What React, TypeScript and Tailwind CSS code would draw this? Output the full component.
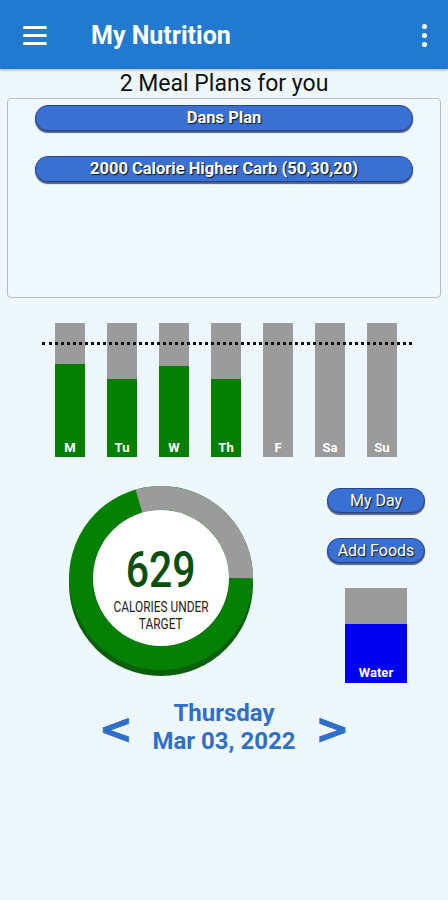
import React from 'react';

const DAYS = [
  { label: 'M', fill: 93 },
  { label: 'Tu', fill: 78 },
  { label: 'W', fill: 91 },
  { label: 'Th', fill: 78 },
  { label: 'F', fill: 0 },
  { label: 'Sa', fill: 0 },
  { label: 'Su', fill: 0 },
];

const PLANS = ['Dans Plan', '2000 Calorie Higher Carb (50,30,20)'];

function PillButton({ children, className = '' }: { children: React.ReactNode; className?: string }) {
  return (
    <div
      className={`flex items-center justify-center rounded-full bg-[#3a70d2] border border-[#24438a] shadow-[0_2px_1px_rgba(10,30,80,0.7)] text-white [text-shadow:1px_1px_1px_rgba(0,0,0,0.85)] ${className}`}
    >
      {children}
    </div>
  );
}

function Donut() {
  const r = 80;
  const c = 2 * Math.PI * r;
  const gray = c * (106 / 360);
  return (
    <div className="relative w-[190px] h-[194px]">
      <svg width="190" height="194" viewBox="0 0 190 194" className="absolute inset-0">
        {/* 3d lip */}
        <circle cx="95" cy="99" r="92" fill="#0b5f0b" />
        <circle cx="95" cy="93" r={r} fill="none" stroke="#058005" strokeWidth="24" />
        <circle
          cx="95"
          cy="93"
          r={r}
          fill="none"
          stroke="#9b9b9b"
          strokeWidth="24"
          strokeDasharray={`${gray} ${c}`}
          transform="rotate(-106 95 93)"
        />
        <circle cx="95" cy="93" r="68" fill="#ffffff" />
      </svg>
      <div className="absolute left-0 right-0 top-[58px] flex flex-col items-center">
        <span className="text-[50px] leading-[54px] font-medium text-[#0c4f0c] scale-x-[0.82]">629</span>
        <span className="mt-[2px] text-[14px] leading-[17px] text-[#222] scale-x-[0.85] whitespace-nowrap">CALORIES UNDER</span>
        <span className="text-[14px] leading-[17px] text-[#222] scale-x-[0.85]">TARGET</span>
      </div>
    </div>
  );
}

export default function App() {
  return (
    <div className="w-[448px] h-[900px] bg-[#eef8fc] font-['Roboto',sans-serif] flex flex-col">
      {/* App bar */}
      <div className="h-[69px] bg-[#217ad0] flex items-center px-[23px] pt-[2px] shadow-[0_1px_3px_rgba(0,0,0,0.3)]">
        <div className="flex flex-col gap-[5px] w-[24px]">
          <span className="h-[3px] bg-white rounded-sm" />
          <span className="h-[3px] bg-white rounded-sm" />
          <span className="h-[3px] bg-white rounded-sm" />
        </div>
        <span className="ml-[44px] text-white text-[25px] font-bold">My Nutrition</span>
        <div className="ml-auto mr-[-2px] flex flex-col gap-[4px] items-center">
          <span className="w-[5px] h-[5px] rounded-full bg-white" />
          <span className="w-[5px] h-[5px] rounded-full bg-white" />
          <span className="w-[5px] h-[5px] rounded-full bg-white" />
        </div>
      </div>

      <div className="h-[29px] flex items-center justify-center text-[23px] text-[#111] pt-[2px]">2 Meal Plans for you</div>

      {/* Meal plans box */}
      <div className="mx-[7px] h-[200px] border border-[#b9bcbd] rounded-[4px] bg-[#eff9fd] px-[27px] pt-[6px] flex flex-col gap-[25px]">
        {PLANS.map((p) => (
          <PillButton key={p} className="h-[26px] text-[16.5px] font-bold">
            {p}
          </PillButton>
        ))}
      </div>

      {/* Week chart */}
      <div className="relative mt-[25px] h-[134px] pl-[55px] flex gap-[22px]">
        {DAYS.map((d) => (
          <div key={d.label} className="relative w-[30px] h-full bg-[#9b9b9b] flex flex-col justify-end">
            <div className="w-full bg-[#037f03]" style={{ height: `${d.fill}px` }} />
            <span className="absolute bottom-0 left-0 right-0 text-center text-white text-[13px] font-bold">
              {d.label}
            </span>
          </div>
        ))}
        <div className="absolute left-[42px] w-[370px] top-[19px] border-t-[3px] border-dotted border-[#111]" />
      </div>

      {/* Donut + actions */}
      <div className="mt-[28px] flex pl-[66px] pr-[23px]">
        <Donut />
        <div className="ml-auto w-[98px] flex flex-col items-center pt-[3px]">
          <PillButton className="w-[98px] h-[25px] text-[16px]">My Day</PillButton>
          <PillButton className="mt-[25px] w-[98px] h-[25px] text-[16px]">Add Foods</PillButton>
          <div className="mt-[25px] w-[62px] h-[95px] flex flex-col relative">
            <div className="h-[36px] bg-[#9b9b9b]" />
            <div className="flex-1 bg-[#0000ee]" />
            <span className="absolute bottom-[1px] left-0 right-0 text-center text-white text-[13px] font-bold">Water</span>
          </div>
        </div>
      </div>

      {/* Date navigation */}
      <div className="mt-[16px] flex items-center justify-center text-[#2f6fcb] font-bold">
        <span className="text-[40px] leading-[40px] mt-[4px] font-['DejaVu_Sans',sans-serif] [-webkit-text-stroke:1px_#2f6fcb]">&lt;</span>
        <div className="mx-[20px] flex flex-col items-center text-[24px] leading-[28px]">
          <span>Thursday</span>
          <span>Mar 03, 2022</span>
        </div>
        <span className="text-[40px] leading-[40px] mt-[4px] font-['DejaVu_Sans',sans-serif] [-webkit-text-stroke:1px_#2f6fcb]">&gt;</span>
      </div>
    </div>
  );
}
